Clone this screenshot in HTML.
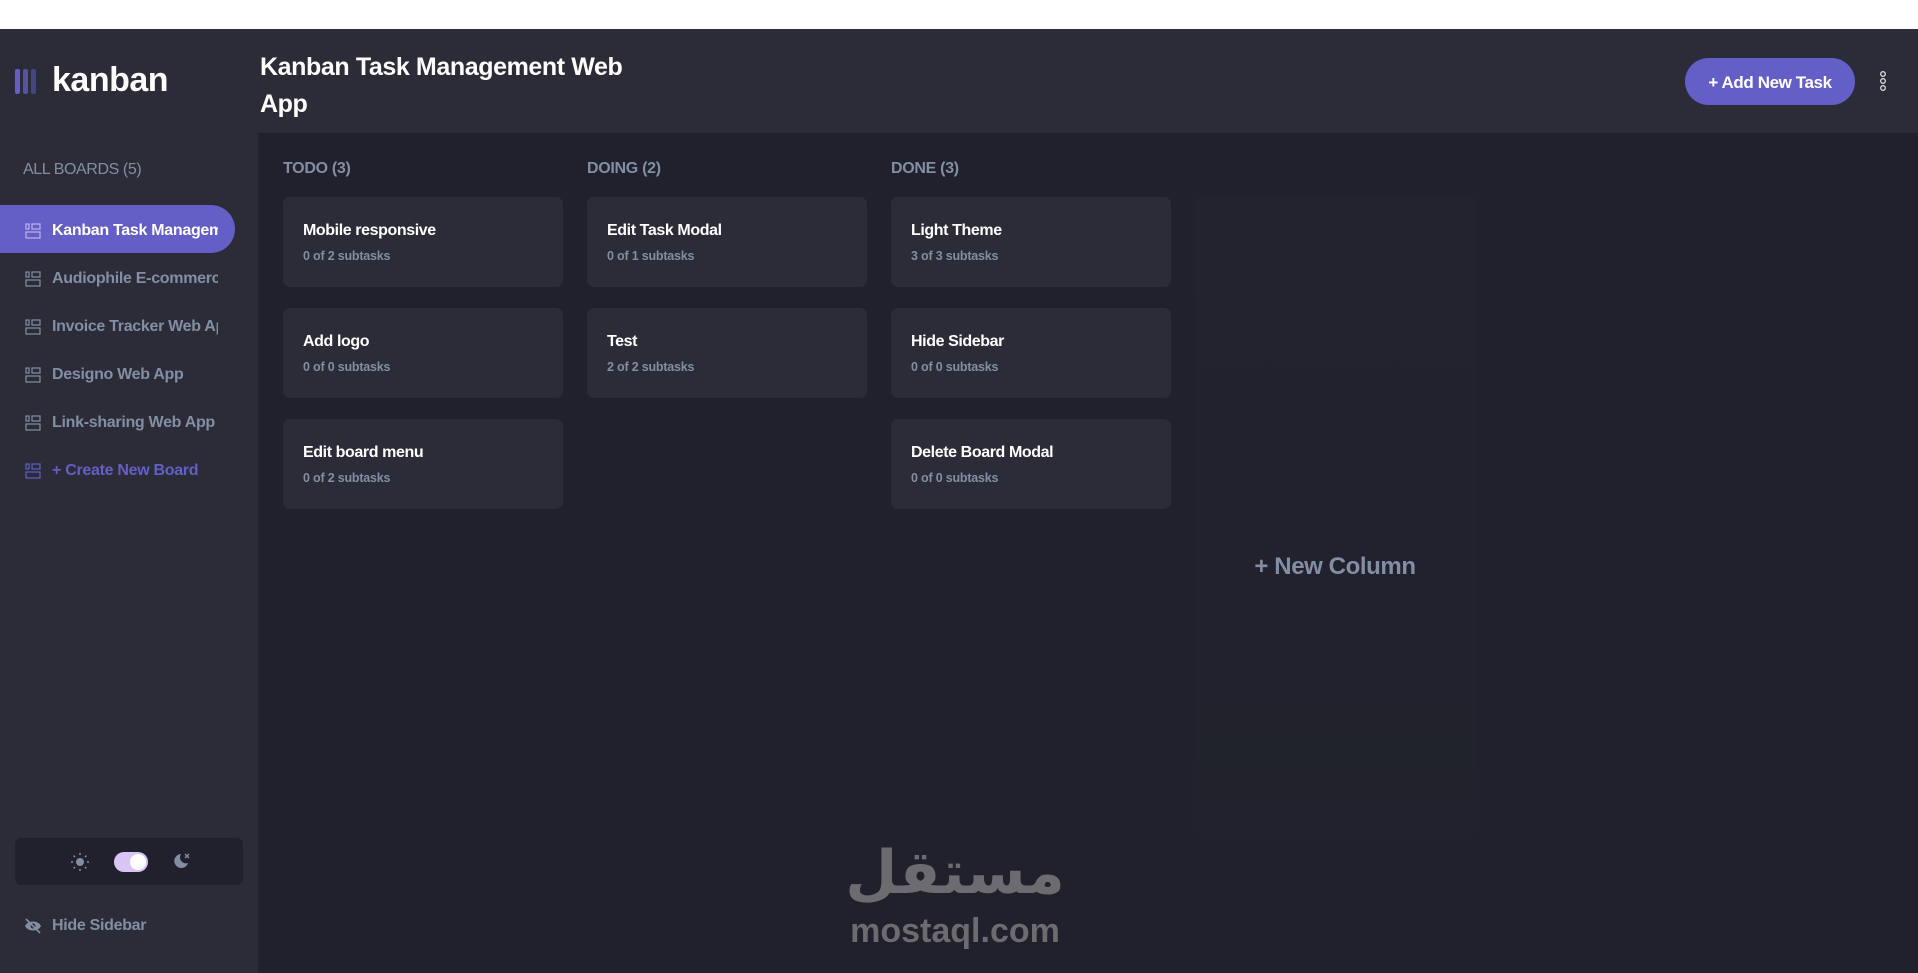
<!DOCTYPE html>
<html><head><meta charset="utf-8"><style>
*{margin:0;padding:0;box-sizing:border-box}
body{width:1918px;height:973px;overflow:hidden;background:#fff;font-family:"Liberation Sans",sans-serif;position:relative}
.hdr{position:absolute;left:0;top:29px;width:1918px;height:104px;background:#2b2c37}
.side{position:absolute;left:0;top:133px;width:258px;height:840px;background:#2b2c37}
.main{position:absolute;left:258px;top:133px;width:1660px;height:840px;background:#20212c}
.a{position:absolute;white-space:nowrap}
.item{position:absolute;left:0;width:235px;height:48px;display:flex;align-items:center;padding-left:25px;padding-top:3px;font-weight:bold;font-size:16px;color:#828fa3;overflow:hidden;letter-spacing:-.3px}
.item span{display:inline-block;width:166px;overflow:hidden;white-space:nowrap}
.item svg{margin-right:11px;flex:none}
.card{position:absolute;width:280px;height:90px;background:#2b2c37;border-radius:7px;padding:25px 20px}
.card b{display:block;color:#fff;font-size:16px;letter-spacing:-.4px}
.card i{display:block;font-style:normal;color:#828fa3;font-size:12.5px;font-weight:bold;margin-top:9px;letter-spacing:-.2px}
.ch{position:absolute;top:160px;font-size:16px;font-weight:bold;color:#828fa3;letter-spacing:-.3px}
</style></head><body>
<div class="hdr"></div>
<div class="side"></div>
<div class="main"></div>
<div class="a" style="left:15px;top:69px;width:5px;height:25px;background:#635fc7;border-radius:2px"></div>
<div class="a" style="left:23px;top:69px;width:5px;height:25px;background:#635fc7;opacity:.75;border-radius:2px"></div>
<div class="a" style="left:31px;top:69px;width:5px;height:25px;background:#635fc7;opacity:.5;border-radius:2px"></div>
<div class="a" style="left:52px;top:61px;font-size:34px;font-weight:bold;color:#fff;letter-spacing:-.5px">kanban</div>
<div class="a" style="left:260px;top:49px;font-size:25px;font-weight:bold;color:#fff;line-height:37px;white-space:normal;width:380px;letter-spacing:-.4px">Kanban Task Management Web App</div>
<div class="a" style="left:1685px;top:58px;width:170px;height:47px;border-radius:24px;background:#635fc7;color:#fff;font-weight:bold;font-size:17px;display:flex;align-items:center;justify-content:center;letter-spacing:-.4px;padding-top:2px">+ Add New Task</div>
<svg class="a" style="left:1878px;top:70px" width="10" height="24"><g fill="none" stroke="#ddd" stroke-width="1.3"><circle cx="5" cy="4" r="2.3"/><circle cx="5" cy="11" r="2.3"/><circle cx="5" cy="18" r="2.3"/></g></svg>
<div class="a" style="left:23px;top:161px;font-size:16px;color:#828fa3;letter-spacing:-.4px">ALL BOARDS (5)</div>
<div class="a" style="left:0;top:205px;width:235px;height:48px;background:#635fc7;border-radius:0 24px 24px 0"></div>
<div class="item" style="top:205px;color:#fff"><svg width="16" height="16" fill="none" stroke="#b8b6e6" stroke-width="1.2"><rect x="1" y="1" width="3" height="5"/><rect x="7" y="1" width="8" height="5"/><rect x="1" y="9" width="14" height="6"/></svg><span>Kanban Task Management</span></div>
<div class="item" style="top:253px"><svg width="16" height="16" fill="none" stroke="#828fa3" stroke-width="1.2"><rect x="1" y="1" width="3" height="5"/><rect x="7" y="1" width="8" height="5"/><rect x="1" y="9" width="14" height="6"/></svg><span>Audiophile E-commerce</span></div>
<div class="item" style="top:301px"><svg width="16" height="16" fill="none" stroke="#828fa3" stroke-width="1.2"><rect x="1" y="1" width="3" height="5"/><rect x="7" y="1" width="8" height="5"/><rect x="1" y="9" width="14" height="6"/></svg><span>Invoice Tracker Web App</span></div>
<div class="item" style="top:349px"><svg width="16" height="16" fill="none" stroke="#828fa3" stroke-width="1.2"><rect x="1" y="1" width="3" height="5"/><rect x="7" y="1" width="8" height="5"/><rect x="1" y="9" width="14" height="6"/></svg><span>Designo Web App</span></div>
<div class="item" style="top:397px"><svg width="16" height="16" fill="none" stroke="#828fa3" stroke-width="1.2"><rect x="1" y="1" width="3" height="5"/><rect x="7" y="1" width="8" height="5"/><rect x="1" y="9" width="14" height="6"/></svg><span>Link-sharing Web App</span></div>
<div class="item" style="top:445px;color:#635fc7"><svg width="16" height="16" fill="none" stroke="#635fc7" stroke-width="1.2"><rect x="1" y="1" width="3" height="5"/><rect x="7" y="1" width="8" height="5"/><rect x="1" y="9" width="14" height="6"/></svg><span>+ Create New Board</span></div>
<div class="a" style="left:15px;top:838px;width:228px;height:47px;background:#20212c;border-radius:6px"></div>
<svg class="a" style="left:70px;top:852px" width="20" height="20"><circle cx="10" cy="10" r="4" fill="#828fa3"/><g stroke="#828fa3" stroke-width="1.5"><path d="M10 1v2M10 17v2M1 10h2M17 10h2M3.6 3.6l1.4 1.4M15 15l1.4 1.4M3.6 16.4L5 15M15 5l1.4-1.4"/></g></svg>
<div class="a" style="left:114px;top:852px;width:34px;height:20px;border-radius:10px;background:#d9c4f5"></div>
<div class="a" style="left:130px;top:854px;width:16px;height:16px;border-radius:50%;background:#fff"></div>
<svg class="a" style="left:172px;top:852px" width="20" height="18"><path d="M9 2a7 7 0 1 0 7 9a6 6 0 0 1-7-9z" fill="#828fa3"/><path d="M13 2l4 4M17 2l-4 4" stroke="#828fa3" stroke-width="1.4"/></svg>
<svg class="a" style="left:24px;top:918px" width="18" height="16"><path d="M1 8c3-6 13-6 16 0c-3 6-13 6-16 0z" fill="#828fa3"/><circle cx="9" cy="8" r="2.5" fill="#2b2c37"/><path d="M2 1l14 14" stroke="#828fa3" stroke-width="1.6"/></svg>
<div class="a" style="left:52px;top:917px;font-size:16px;font-weight:bold;color:#828fa3;letter-spacing:-.3px">Hide Sidebar</div>
<div class="ch" style="left:283px">TODO (3)</div>
<div class="ch" style="left:587px">DOING (2)</div>
<div class="ch" style="left:891px">DONE (3)</div>
<div class="card" style="left:283px;top:197px"><b>Mobile responsive</b><i>0 of 2 subtasks</i></div>
<div class="card" style="left:283px;top:308px"><b>Add logo</b><i>0 of 0 subtasks</i></div>
<div class="card" style="left:283px;top:419px"><b>Edit board menu</b><i>0 of 2 subtasks</i></div>
<div class="card" style="left:587px;top:197px"><b>Edit Task Modal</b><i>0 of 1 subtasks</i></div>
<div class="card" style="left:587px;top:308px"><b>Test</b><i>2 of 2 subtasks</i></div>
<div class="card" style="left:891px;top:197px"><b>Light Theme</b><i>3 of 3 subtasks</i></div>
<div class="card" style="left:891px;top:308px"><b>Hide Sidebar</b><i>0 of 0 subtasks</i></div>
<div class="card" style="left:891px;top:419px"><b>Delete Board Modal</b><i>0 of 0 subtasks</i></div>
<div class="a" style="left:1195px;top:197px;width:280px;height:740px;border-radius:6px;background:linear-gradient(#22232e,#20212c)"></div>
<div class="a" style="left:1195px;top:553px;width:280px;text-align:center;font-size:24px;font-weight:bold;color:#828fa3;letter-spacing:-.4px">+ New Column</div>
<div class="a" style="left:835px;top:838px;width:240px;text-align:center;font-family:'Noto Sans CJK SC','DejaVu Sans',sans-serif;font-size:60px;font-weight:bold;color:#6b6b70;line-height:60px">مستقل</div>
<div class="a" style="left:835px;top:912px;width:240px;text-align:center;font-size:34px;font-weight:bold;color:#6b6b70">mostaql.com</div>
</body></html>
